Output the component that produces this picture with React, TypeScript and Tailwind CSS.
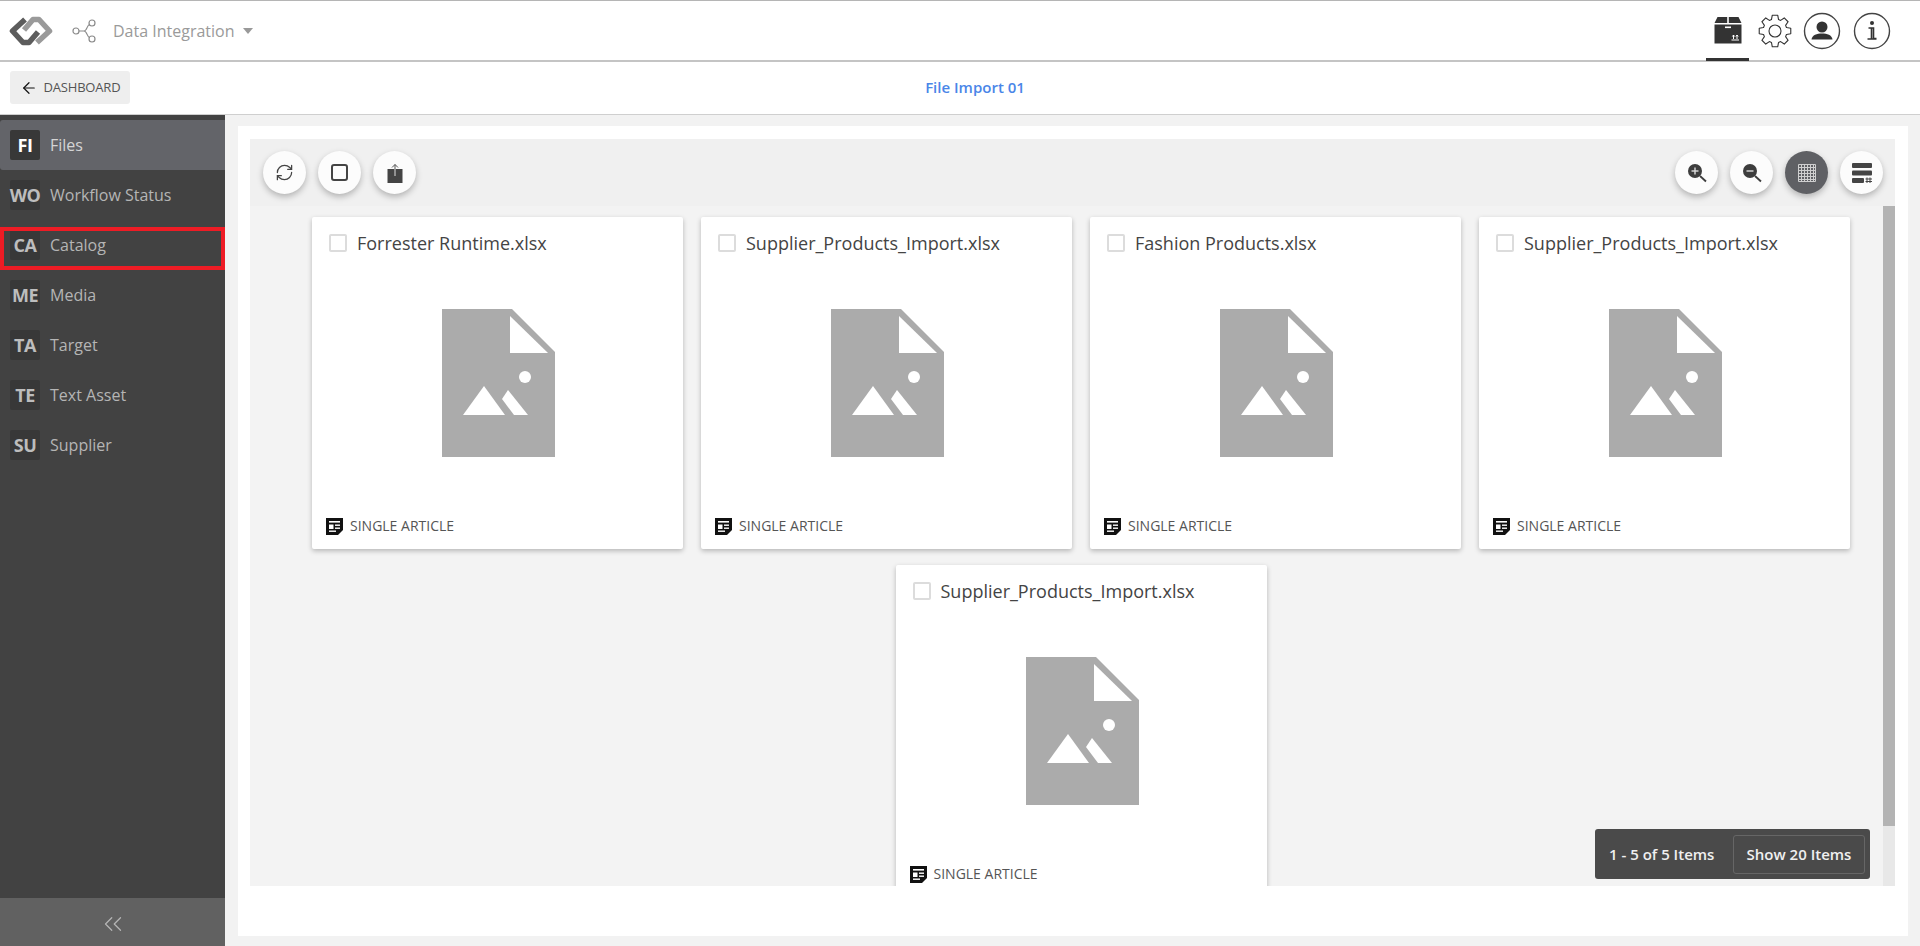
import { ArrowLeft, ChevronsLeft, RefreshCw } from "lucide-react";

const navItems = [
  { code: "FI", label: "Files", active: true },
  { code: "WO", label: "Workflow Status" },
  { code: "CA", label: "Catalog" },
  { code: "ME", label: "Media" },
  { code: "TA", label: "Target" },
  { code: "TE", label: "Text Asset" },
  { code: "SU", label: "Supplier" },
];

const files = [
  "Forrester Runtime.xlsx",
  "Supplier_Products_Import.xlsx",
  "Fashion Products.xlsx",
  "Supplier_Products_Import.xlsx",
  "Supplier_Products_Import.xlsx",
];

const Logo = () => (
  <svg width="46" height="32" viewBox="0 0 46 32" fill="none" strokeWidth="5.5" strokeLinejoin="round">
    <path d="M17 4.5 L4.5 16 L15 27.5 H21 L30 17" stroke="#5c5c5c" />
    <path d="M29 27.5 L41.5 16 L31 4.5 H25 L16 15" stroke="#9a9a9a" />
  </svg>
);

const FlowIcon = () => (
  <svg width="26" height="26" viewBox="0 0 26 26" fill="none" stroke="#8a8a8a" strokeWidth="1.2">
    <circle cx="4" cy="13" r="3" />
    <circle cx="20" cy="5" r="3" />
    <circle cx="20" cy="21" r="3" />
    <path d="M7 13 H12 C15 13 15 7 17.5 6.5 M12 13 C15 13 15 19 17.5 19.5" />
  </svg>
);

const BoxIcon = () => (
  <svg width="28" height="28" viewBox="0 0 28 28">
    <path d="M3.5 1 H13.2 V7 H0.5 Z M14.8 1 H24.5 L27.5 7 H14.8 Z" fill="#333" />
    <path d="M0.5 8.5 H27.5 V27.5 H0.5 Z" fill="#333" />
    <rect x="11" y="10.5" width="6" height="1.6" fill="#fff" />
    <path d="M17.5 24 H25 M19.5 23 V19 M23 23 V19 M18.4 20.5 L19.5 19 L20.6 20.5 M21.9 20.5 L23 19 L24.1 20.5" stroke="#fff" strokeWidth="1" fill="none" />
  </svg>
);

// eight toothed outline, same shape as the settings glyph in the picture
const gearPath = () => {
  const cx = 17;
  const cy = 17;
  const pts: string[] = [];
  for (let i = 0; i < 8; i++) {
    const a = (i * Math.PI) / 4 - Math.PI / 2;
    const offs: [number, number][] = [
      [-0.3, 12],
      [-0.17, 16],
      [0.17, 16],
      [0.3, 12],
    ];
    offs.forEach(([d, r]) => {
      pts.push(`${(cx + r * Math.cos(a + d)).toFixed(2)} ${(cy + r * Math.sin(a + d)).toFixed(2)}`);
    });
  }
  return `M${pts.join(" L")} Z`;
};

const GearIcon = () => (
  <svg width="34" height="34" viewBox="0 0 34 34" fill="none" stroke="#333" strokeWidth="1.1" strokeLinejoin="round">
    <path d={gearPath()} />
    <circle cx="17" cy="17" r="6" />
  </svg>
);

const UserIcon = () => (
  <svg width="38" height="38" viewBox="0 0 38 38">
    <circle cx="19" cy="19" r="17.5" fill="none" stroke="#444" strokeWidth="1.4" />
    <circle cx="19" cy="15" r="5.5" fill="#333" />
    <path d="M8.5 27.5 C9 23 14 21.5 19 21.5 C24 21.5 29 23 29.5 27.5 Z" fill="#333" />
  </svg>
);

const InfoIcon = () => (
  <svg width="38" height="38" viewBox="0 0 38 38">
    <circle cx="19" cy="19" r="17.5" fill="none" stroke="#444" strokeWidth="1.4" />
    <circle cx="19" cy="11" r="2" fill="#333" />
    <path d="M15.5 16 H20.5 V26.5 H23.5 M14.5 27 H23.5 M18.5 16.5 V26.5" stroke="#333" strokeWidth="1.6" fill="none" />
  </svg>
);

const UploadIcon = () => (
  <svg width="16" height="20" viewBox="0 0 16 20">
    <path d="M0.5 6 H15.5 V20 H0.5 Z" fill="#444" />
    <path d="M8 6 V1.5 M5 4.5 L8 1.5 L11 4.5" stroke="#555" strokeWidth="1" fill="none" />
    <path d="M8 13 V6" stroke="#ddd" strokeWidth="1" />
  </svg>
);

const ZoomIcon = ({ plus }: { plus?: boolean }) => (
  <svg width="20" height="20" viewBox="0 0 20 20">
    <circle cx="8" cy="8" r="7" fill="#3d3d3d" />
    <path d="M13 13 L19 18.5" stroke="#3d3d3d" strokeWidth="1.8" />
    <path d="M4.5 8 H11.5" stroke="#ddd" strokeWidth="1.4" />
    {plus && <path d="M8 4.5 V11.5" stroke="#ddd" strokeWidth="1.4" />}
  </svg>
);

const GridIcon = () => (
  <svg width="18" height="18" viewBox="0 0 18 18" fill="none" stroke="#cfcfcf" strokeWidth="1">
    <path d="M.5.5H17.5V17.5H.5Z M.5 3.5H17.5 M.5 6.5H17.5 M.5 9.5H17.5 M.5 12.5H17.5 M.5 15.5H17.5 M3.5.5V17.5 M6.5.5V17.5 M9.5.5V17.5 M12.5.5V17.5 M15.5.5V17.5" />
  </svg>
);

const ListIcon = () => (
  <svg width="20" height="20" viewBox="0 0 20 20">
    <rect x="0" y="0" width="20" height="5" rx="1" fill="#444" />
    <rect x="0" y="7.5" width="20" height="5" rx="1" fill="#444" />
    <rect x="0" y="15" width="12" height="5" rx="1" fill="#444" />
    <path d="M15 14.5 V20 M18 14.5 V20 M13.5 16 H20 M13.5 18.5 H20" stroke="#444" strokeWidth="1" />
  </svg>
);

const FilePlaceholder = () => (
  <svg width="113" height="148" viewBox="0 0 113 148">
    <path d="M0 0 H70 L113 43 V148 H0 Z" fill="#ababab" />
    <path d="M68 7 L106 44 H68 Z" fill="#fff" />
    <circle cx="83" cy="68" r="6" fill="#fff" />
    <path d="M21 106 L42 77 L63 106 Z" fill="#fff" />
    <path d="M60 90 L66 81 L86 106 L72 106 Z" fill="#fff" />
  </svg>
);

const ArticleIcon = () => (
  <svg width="17" height="17" viewBox="0 0 17 17">
    <path d="M0 0 H17 V12 L12 17 H0 Z" fill="#111" />
    <rect x="3" y="3" width="11" height="1.6" fill="#fff" />
    <rect x="3" y="6.5" width="4.5" height="4.5" fill="#fff" />
    <rect x="9" y="6.5" width="5" height="1.4" fill="#fff" />
    <rect x="9" y="9.5" width="5" height="1.4" fill="#fff" />
    <rect x="3" y="12.5" width="7" height="1.4" fill="#fff" />
  </svg>
);

const RoundBtn = ({ children, dark }: { children: React.ReactNode; dark?: boolean }) => (
  <button
    className={`w-[43px] h-[43px] rounded-full flex items-center justify-center shadow-[0_3px_6px_rgba(0,0,0,0.25)] ${dark ? "bg-[#5f6064]" : "bg-[#fcfcfc]"}`}
  >
    {children}
  </button>
);

const FileCard = ({ name }: { name: string }) => (
  <div className="w-[371px] h-[332px] shrink-0 bg-white rounded-[2px] shadow-[0_2px_5px_rgba(0,0,0,0.25)] flex flex-col px-[14px]">
    <div className="flex items-center gap-[10px] pt-[14px] pl-[3px]">
      <span className="w-[18px] h-[18px] border-2 border-[#dcdcdc] rounded-[2px]" />
      <span className="text-[18px] leading-[24px] text-[#444]">{name}</span>
    </div>
    <div className="flex justify-center pt-[54px] pl-[2px]">
      <FilePlaceholder />
    </div>
    <div className="flex items-center gap-[7px] mt-[60px]">
      <ArticleIcon />
      <span className="text-[14px] leading-[18px] text-[#555]">SINGLE ARTICLE</span>
    </div>
  </div>
);

export default function App() {
  return (
    <div className="h-[946px] w-[1920px] overflow-hidden flex flex-col bg-white font-['Open_Sans',sans-serif] relative">
      {/* top bar */}
      <header className="h-[62px] shrink-0 border-t border-t-[#b5b5b5] border-b-2 border-b-[#c4c4c4] flex items-center pl-[8px] pr-[29px]">
        <Logo />
        <span className="ml-[18px]">
          <FlowIcon />
        </span>
        <span className="ml-[15px] text-[16px] text-[#9a9a9a]">Data Integration</span>
        <span className="ml-[8px] border-x-[5px] border-x-transparent border-t-[6px] border-t-[#999]" />
        <div className="ml-auto flex items-center h-full">
          <div className="w-[43px] h-full flex items-center justify-center border-b-[3px] border-[#333] mb-[-1px]">
            <BoxIcon />
          </div>
          <span className="ml-[9px]">
            <GearIcon />
          </span>
          <span className="ml-[11px]">
            <UserIcon />
          </span>
          <span className="ml-[12px]">
            <InfoIcon />
          </span>
        </div>
      </header>

      {/* sub header */}
      <div className="h-[53px] shrink-0 border-b border-[#cfcfcf] relative flex items-center justify-center">
        <button className="absolute left-[10px] top-[9px] h-[33px] w-[120px] bg-[#eeeeee] rounded-[3px] flex items-center justify-center gap-[6px] text-[13px] tracking-[-0.2px] text-[#555]">
          <ArrowLeft size={18} strokeWidth={1.6} color="#111" />
          DASHBOARD
        </button>
        <span className="text-[15px] leading-[20px] font-semibold text-[#4a86e8] ml-[30px] mb-[2px]">File Import 01</span>
      </div>

      <div className="flex-1 flex min-h-0">
        {/* sidebar */}
        <aside className="w-[225px] shrink-0 bg-[#424242] flex flex-col pt-[5px]">
          {navItems.map((item) => (
            <div
              key={item.code}
              className={`h-[50px] flex items-center pl-[10px] gap-[10px] ${item.active ? "bg-[#636469] rounded-tl-[3px] rounded-bl-[3px]" : ""}`}
            >
              <span
                className={`w-[30px] h-[30px] rounded-[2px] bg-[#383838] flex items-center justify-center text-[18px] font-bold tracking-[-0.5px] ${item.active ? "text-white" : "text-[#bdbdbd]"}`}
              >
                {item.code}
              </span>
              <span className={`text-[16px] ${item.active ? "text-[#d5d5d5]" : "text-[#b5b5b5]"}`}>{item.label}</span>
            </div>
          ))}
          <div className="mt-auto h-[48px] bg-[#616161] flex items-center justify-center pt-[3px]">
            <ChevronsLeft size={30} strokeWidth={1} color="#b5b5b5" />
          </div>
        </aside>

        {/* content */}
        <main className="flex-1 min-w-0 bg-[#f2f2f2] pt-[11px] pb-[10px] pl-[13px] pr-[12px]">
          <div className="h-full bg-white pt-[13px] pb-[50px] pl-[12px] pr-[13px]">
            <div className="h-full flex flex-col relative">
              <div className="h-[67px] shrink-0 bg-[#f0f0f0] flex items-center justify-between pl-[13px] pr-[12px]">
                <div className="flex gap-[12px]">
                  <RoundBtn>
                    <RefreshCw size={19} strokeWidth={1.6} color="#444" />
                  </RoundBtn>
                  <RoundBtn>
                    <span className="w-[17px] h-[17px] border-2 border-[#444] rounded-[3px]" />
                  </RoundBtn>
                  <RoundBtn>
                    <UploadIcon />
                  </RoundBtn>
                </div>
                <div className="flex gap-[12px]">
                  <RoundBtn>
                    <ZoomIcon plus />
                  </RoundBtn>
                  <RoundBtn>
                    <ZoomIcon />
                  </RoundBtn>
                  <RoundBtn dark>
                    <GridIcon />
                  </RoundBtn>
                  <RoundBtn>
                    <ListIcon />
                  </RoundBtn>
                </div>
              </div>
              <div className="flex-1 min-h-0 bg-[#f3f3f3] flex overflow-hidden">
                <div className="flex-1 flex flex-wrap justify-center content-start gap-x-[18px] gap-y-[16px] pt-[11px] pl-[29px]">
                  {files.map((name, i) => (
                    <FileCard key={i} name={name} />
                  ))}
                </div>
                <div className="w-[12px] shrink-0 bg-[#e8e8e8]">
                  <div className="h-[620px] bg-[#b3b3b3]" />
                </div>
              </div>
              {/* pager */}
              <div className="absolute right-[25px] bottom-[7px] h-[50px] w-[275px] bg-[#4a4a4a] rounded-[3px] flex items-center justify-between pl-[14px] pr-[5px] text-[15px] font-semibold text-[#f0f0f0]">
                <span>1 - 5 of 5 Items</span>
                <span className="h-[39px] w-[132px] border border-[#666] rounded-[3px] flex items-center justify-center">
                  Show 20 Items
                </span>
              </div>
            </div>
          </div>
        </main>
      </div>

      {/* highlight round the Catalog row */}
      <div className="absolute left-0 top-[227px] w-[225px] h-[43px] border-[4px] border-[#ee1c25]" />
    </div>
  );
}
